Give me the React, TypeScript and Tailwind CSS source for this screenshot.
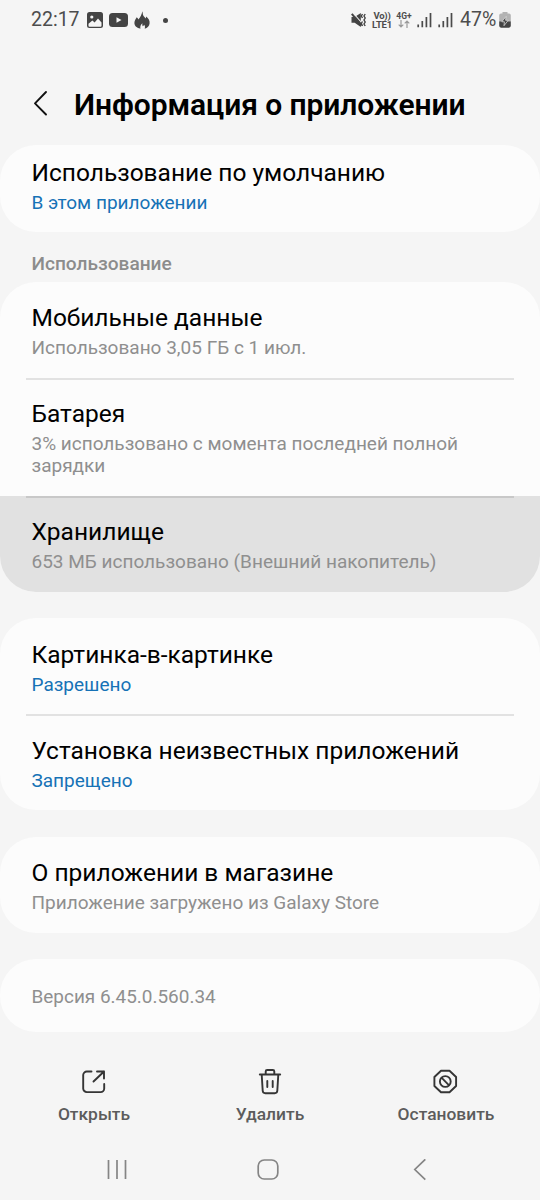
import clsx from "clsx";

interface RowProps {
  title: string;
  note: string;
  accent?: boolean;
  pressed?: boolean;
  divider?: boolean;
  style?: string;
}

function Row({ title, note, accent, pressed, divider, style = "h-24 pt-[22px]" }: RowProps) {
  return (
    <div className={clsx("px-[31.5px] relative", pressed && "bg-[#e1e1e1]", style)}>
      {divider && (
        <div
          className={clsx(
            "absolute left-[26px] right-[26px] top-0 h-[1.5px]",
            pressed ? "bg-[#c8c8c8]" : "bg-[#e2e2e2]"
          )}
        />
      )}
      <h3 className="text-[24.5px] leading-7 text-black">{title}</h3>
      <p
        className={clsx(
          "mt-[5px] text-[19px] leading-[22px] w-[450px]",
          accent ? "text-[#1672b6]" : "text-[#8f8f8f]"
        )}
      >
        {note}
      </p>
    </div>
  );
}

function Signal() {
  return (
    <svg width="15" height="16" viewBox="0 0 15 16" stroke="#4a4a4a" strokeWidth="1.7">
      <path d="M1.2 12.5V15.3M5.3 9V15.3M9.4 5V15.3M13.5 1V15.3" />
    </svg>
  );
}

function StatusBar() {
  return (
    <div className="h-10 pl-[31px] pr-[29.5px] flex items-center justify-between text-[#4d4d4d]">
      <div className="flex items-center">
        <span className="text-[19.5px] leading-5 w-[56px]">22:17</span>
        <svg width="16" height="16" viewBox="0 0 16 16">
          <rect width="16" height="16" rx="2.5" fill="#444" />
          <circle cx="4.8" cy="5" r="1.6" fill="#f5f5f5" />
          <path d="M1.5 11.7 5.4 8.4l2.2 2L11 6.5l3.5 4v3.2a1 1 0 0 1-1 1h-11a1 1 0 0 1-1-1Z" fill="#f5f5f5" />
        </svg>
        <svg className="ml-[6px]" width="19" height="14" viewBox="0 0 19 14">
          <rect width="19" height="14" rx="3.5" fill="#444" />
          <path d="m7.5 4.2 5 2.8-5 2.8Z" fill="#f5f5f5" />
        </svg>
        <svg className="ml-[6px]" width="16" height="18" viewBox="0 0 16 18">
          <path
            d="M8.4.2c.6 2 .2 3.3 1 4.6.7 1 1.6 1.5 2 2.7.6-.5.8-1.1.8-1.9 2.2 1.7 3.7 4 3.4 6.6-.2 2.8-2.2 4.9-4.9 5.5.5-1.500.4-2.700-.5-3.900-.4.8-.9 1.200-1.600 1.500-.4-.9-.4-2-.2-3.100-1.500 1.200-2.500 3.200-2 5.500C3 16.900.4 15 .4 12c0-2.600 1.500-4 2.300-5.800.9.5 1.400 1.200 1.600 2.200C6.500 6.200 7.700 3.300 8.400.2Z"
            fill="#444"
          />
        </svg>
        <span className="ml-[13px] size-[5px] rounded-full bg-[#444]" />
      </div>

      <div className="flex items-center">
        <svg width="15" height="16" viewBox="0 0 15 16" fill="none" stroke="#444" strokeWidth="1.5">
          <path d="M.5 5h3.2L9.8 1v14l-6.100-4.200H.5Z" fill="#444" stroke="none" />
          <path d="M2.200 1.200 10.500 10.500" stroke="#f5f5f5" strokeWidth="1.100" />
          <path d="M.8 1.900 10.500 13.500" strokeWidth="2" />
          <path d="m11.500 2-1.200 2 1.200 2M11.500 9.500l-1.200 2 1.200 2.500M14.200 2 13 4l1.200 2L13 8l1.200 2-1.200 2 1.200 2" strokeWidth="1.400" />
        </svg>
        <div className="ml-[6px] w-[20px] flex flex-col items-center text-[9.5px] leading-[9px] font-bold whitespace-nowrap tracking-[-0.2px]">
          <span>Vo))</span>
          <span>LTE1</span>
        </div>
        <div className="ml-[4px] w-[16px] flex flex-col items-center">
          <span className="text-[8.5px] leading-[8px] font-bold whitespace-nowrap">4G+</span>
          <svg width="12" height="8" viewBox="0 0 12 8" fill="none" stroke="#999" strokeWidth="1.2">
            <path d="M3 0v7M.7 4.7 3 7l2.3-2.3M9 8V1M6.7 3.3 9 1l2.3 2.3" />
          </svg>
        </div>
        <div className="ml-[5px] flex gap-[6px]">
          <Signal />
          <Signal />
        </div>
        <span className="ml-[7px] text-[19.5px] leading-5 w-[38.5px] whitespace-nowrap">47%</span>
        <svg width="12" height="16" viewBox="0 0 12 16">
          <path d="M3.5 0h5v1.5H10a1.8 1.8 0 0 1 1.8 1.8V10H.2V3.3A1.8 1.8 0 0 1 2 1.5h1.5Z" fill="#b3b3b3" />
          <path d="M.2 9.5h11.6v4.3A1.9 1.9 0 0 1 10 15.7H2a1.9 1.9 0 0 1-1.8-1.9Z" fill="#444" />
          <path d="M7 4.500 2.800 9.800h2.600L5 13.700l4.200-5.400H6.600Z" fill="#444" stroke="#e8e8e8" strokeWidth=".7" />
        </svg>
      </div>
    </div>
  );
}

function Actions() {
  return (
    <div className="h-[108px] pt-[37px] flex text-[#5c5c5c] text-[17.4px] leading-6 font-medium">
      <div className="w-[188px] flex flex-col items-center gap-[7px]">
        <svg width="26" height="26" viewBox="0 0 26 26" fill="none" stroke="#353535" strokeWidth="1.9" strokeLinecap="round" strokeLinejoin="round">
          <path d="M10.5 2.5H5.8A3.6 3.6 0 0 0 2.2 6.1V19.5a3.6 3.6 0 0 0 3.6 3.6h13.8A3.6 3.6 0 0 0 23.2 19.5v-4.5M16 2.5h7v7M23 2.5 12.5 12.5" />
        </svg>
        <span>Открыть</span>
      </div>
      <div className="w-[164px] flex flex-col items-center gap-[7px]">
        <svg width="26" height="26" viewBox="0 0 26 26" fill="none" stroke="#353535" strokeWidth="1.9" strokeLinecap="round" strokeLinejoin="round">
          <path d="M2.8 5.5h20.400M8.7 5V2.5A1.500 1.500 0 0 1 10.200 1h5.600a1.500 1.500 0 0 1 1.500 1.500V5M4.700 5.500l1 16.300a2.600 2.600 0 0 0 2.600 2.400h9.400a2.600 2.600 0 0 0 2.600-2.400l1-16.300M10.300 12v6M15.700 12v6" />
        </svg>
        <span>Удалить</span>
      </div>
      <div className="w-[188px] flex flex-col items-center gap-[7px]">
        <svg width="26" height="26" viewBox="0 0 26 26" fill="none" stroke="#353535" strokeWidth="1.9" strokeLinejoin="round">
          <path d="M8 1.7h8.5l6.6 6.3v9l-6.6 6.3H8l-6.6-6.3V8Z" />
          <circle cx="12.3" cy="12.5" r="5.4" />
          <path d="m8.5 8.7 7.6 7.6" />
        </svg>
        <span>Остановить</span>
      </div>
    </div>
  );
}

function NavBar() {
  return (
    <div className="h-[60px] pt-[19px] pl-[106px] flex text-[#858585]">
      <svg width="22" height="21" viewBox="0 0 22 21" stroke="currentColor" strokeWidth="1.7">
        <path d="M2.5 1v19M11 1v19M19.5 1v19" />
      </svg>
      <svg className="ml-[129px]" width="22" height="21" viewBox="0 0 22 21" fill="none" stroke="currentColor" strokeWidth="1.7">
        <rect x="1.2" y="1" width="19.6" height="19" rx="6" />
      </svg>
      <svg className="ml-[134px]" width="14" height="22" viewBox="0 0 14 22" fill="none" stroke="currentColor" strokeWidth="1.7">
        <path d="M12.3 .3 1.8 10.5l10.5 10.2" />
      </svg>
    </div>
  );
}

function App() {
  return (
    <div className="w-[540px] h-[1200px] overflow-hidden bg-[#f5f5f5] font-['Roboto',sans-serif]">
      <StatusBar />
      <header className="h-[105px] pt-[45px] pl-[33px] flex">
        <svg className="mt-[5px]" width="15" height="26" viewBox="0 0 15 26" fill="none" stroke="#111" strokeWidth="1.9" strokeLinecap="round" strokeLinejoin="round">
          <path d="M13 2 2 13.3 13 24.5" />
        </svg>
        <h1 className="ml-[26px] text-[30px] leading-10 font-semibold tracking-[-0.08px] text-black whitespace-nowrap">
          Информация о приложении
        </h1>
      </header>

      <section className="rounded-[36px] overflow-hidden bg-[#fcfcfc]">
        <Row title="Использование по умолчанию" note="В этом приложении" accent style="h-[87px] pt-[14px]" />
      </section>

      <h2 className="h-[50px] pt-5 pl-[31.5px] text-[19.1px] leading-6 font-medium text-[#8c8c8c]">Использование</h2>

      <section className="rounded-[36px] overflow-hidden bg-[#fcfcfc]">
        <Row title="Мобильные данные" note="Использовано 3,05 ГБ с 1 июл." />
        <Row title="Батарея" note="3% использовано с момента последней полной зарядки" divider style="h-[118px] pt-[22px]" />
        <Row title="Хранилище" note="653 МБ использовано (Внешний накопитель)" divider pressed />
      </section>

      <section className="mt-[26px] rounded-[36px] overflow-hidden bg-[#fcfcfc]">
        <Row title="Картинка-в-картинке" note="Разрешено" accent style="h-24 pt-[23px]" />
        <Row title="Установка неизвестных приложений" note="Запрещено" accent divider style="h-24 pt-[23px]" />
      </section>

      <section className="mt-[27px] rounded-[36px] overflow-hidden bg-[#fcfcfc]">
        <Row title="О приложении в магазине" note="Приложение загружено из Galaxy Store" />
      </section>

      <section className="mt-[26px] h-[73px] rounded-[36px] pl-[31.5px] pt-[3px] flex items-center bg-[#fcfcfc] text-[18.95px] text-[#8f8f8f]">
        Версия 6.45.0.560.34
      </section>

      <Actions />
      <NavBar />
    </div>
  );
}

export default App;
